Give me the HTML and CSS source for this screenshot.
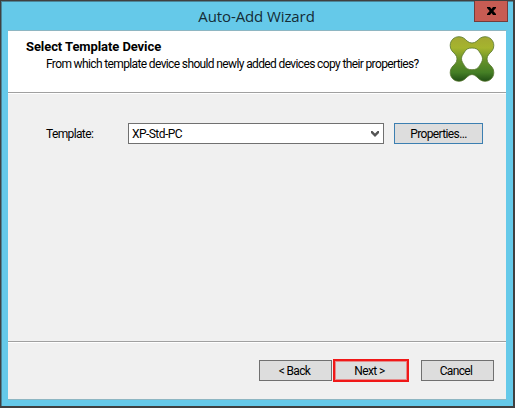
FILE: index.html
```html
<!DOCTYPE html>
<html lang="en">
<head>
<meta charset="utf-8">
<title>Auto-Add Wizard</title>
<link rel="stylesheet" href="styles.css">
</head>
<body>
<div class="window">
  <header class="titlebar">
    <h1 class="title">Auto-Add Wizard</h1>
    <button class="close" aria-label="Close">
      <svg width="9" height="8" viewBox="0 0 9 8"><path d="M0 0h3l1.500 2L6 0h3v1L6.300 4 9 7v1H6L4.500 6 3 8H0V7l2.700-3L0 1z"/></svg>
    </button>
  </header>
  <main class="content">
    <section class="banner">
      <div class="heading">
        <h2 class="step">Select Template Device</h2>
        <p class="question">From which template device should newly added devices copy their properties?</p>
      </div>
      <svg class="logo" width="46" height="46" viewBox="0 0 46 46">
        <defs>
          <linearGradient id="green" x1="0" y1="0" x2="0" y2="1">
            <stop offset="0" stop-color="#a3a832"/>
            <stop offset=".25" stop-color="#a5b42e"/>
            <stop offset=".55" stop-color="#638f28"/>
            <stop offset=".8" stop-color="#457f25"/>
            <stop offset="1" stop-color="#204f14"/>
          </linearGradient>
        </defs>
        <path fill="url(#green)" stroke="#56752c" stroke-width=".8" fill-rule="evenodd" d="M10 .7C5 .7 1.200 4.500 1.200 9.500c0 4 2 6 4.800 8.500q4 5 0 10c-2.800 2.500-4.800 4.500-4.800 8.500 0 5 3.800 8.800 8.800 8.800 3.500 0 6-2 8-4.300q5-5 10 0c2 2.300 4.500 4.300 8 4.300 5 0 8.800-3.800 8.800-8.800 0-4-2-6-4.800-8.500q-4-5 0-10c2.800-2.500 4.800-4.500 4.800-8.500 0-5-3.800-8.800-8.800-8.800-3.500 0-6 2-8 4.300q-5 4-10 0C16 2.700 13.500.7 10 .7zM23 12c4 0 6 1.300 7.500 4s3 4 3 6.700-1.500 4.300-3 7-3.500 4-7.500 4-6-1.300-7.500-4-3-4.300-3-7 1.500-4 3-6.700S19 12 23 12z"/>
      </svg>
    </section>
    <section class="form">
      <label class="label" for="template">Template:</label>
      <div class="combo" id="template">
        <span class="value">XP-Std-PC</span>
        <svg width="8" height="6" viewBox="0 0 8 6"><path d="M0 0h1.500L4 2.500 6.500 0H8v2L4 6 0 2z" fill="#555"/></svg>
      </div>
      <button class="button properties"><span>Properties...</span></button>
    </section>
    <footer class="actions">
      <button class="button back"><span>&lt; Back</span></button>
      <button class="button next"><span>Next &gt;</span></button>
      <button class="button cancel"><span>Cancel</span></button>
    </footer>
  </main>
</div>
</body>
</html>
```
FILE: styles.css
```css
* { box-sizing: border-box; }
body { margin: 0; }
h1, h2, p { margin: 0; font-weight: normal; }
.window {
  width: 515px;
  height: 408px;
  padding: 0 7px 7px 6px;
  border: solid #404040;
  border-width: 1px 2px 2px 1px;
  background: #65c9e9;
  box-shadow: inset 1px 1px #4d8598;
  font: 12px/16px Roboto, "Liberation Sans", sans-serif;
  letter-spacing: -.63px;
  color: #000;
}
.titlebar {
  display: flex;
  align-items: flex-start;
  height: 29px;
  padding-left: 32px;
}
.title {
  flex: 1;
  padding-top: 4px;
  text-align: center;
  font: 15px/22px "Open Sans", sans-serif;
  letter-spacing: -.1px;
  color: #142c36;
}
.close {
  display: flex;
  align-items: center;
  justify-content: center;
  width: 34px;
  height: 21px;
  margin-right: -2px;
  padding: 0;
  border: 1px solid #743c3b;
  border-top: 0;
  background: #c75c53;
}
.content {
  display: flex;
  flex-direction: column;
  width: 499px;
  height: 370px;
  margin-left: 1px;
  border: solid #8eb6c2;
  border-width: 1px 1px 1px 0;
  border-right-color: #65c9e9;
  background: #f0f0f0;
}
.banner {
  display: flex;
  justify-content: space-between;
  height: 62px;
  padding: 5px 11px 0 18px;
  background: #fff;
  border-bottom: 1px solid #a0a0a0;
}
.heading { padding-top: 3px; }
.step { font-weight: bold; font-size: 13px; line-height: 16px; letter-spacing: -.08px; white-space: nowrap; }
.question { padding: 1px 0 0 20px; white-space: nowrap; }
.form {
  display: flex;
  flex: 1;
  align-items: flex-start;
  padding: 29px 0 0 38px;
  border-top: 1px solid #fff;
}
.label { width: 82px; line-height: 22px; }
.combo {
  display: flex;
  align-items: center;
  justify-content: space-between;
  width: 256px;
  height: 21px;
  margin-right: 10px;
  padding: 0 4px 0 3px;
  border: 1px solid #707070;
  background: #fff;
}
.value { letter-spacing: -.55px; }
.button {
  width: 73px;
  height: 21px;
  padding: 0;
  border: 1px solid #707070;
  background: #ddd;
  font: inherit;
  letter-spacing: inherit;
  color: inherit;
}
.properties { width: 89px; border-color: #3c7fb1; }
.actions {
  display: flex;
  align-items: flex-start;
  height: 58px;
  padding: 18px 0 0 251px;
  border-top: 1px solid #a0a0a0;
  box-shadow: inset 0 1px #fff;
}
.back { padding-right: 2px; }
.cancel { padding-right: 3px; }
.next {
  width: 76px;
  height: 23px;
  margin: -1px 12px 0 1px;
  padding-right: 3px;
  border: 2px solid #f01818;
  box-shadow: inset 0 0 0 1px #e58b8b;
}
```
